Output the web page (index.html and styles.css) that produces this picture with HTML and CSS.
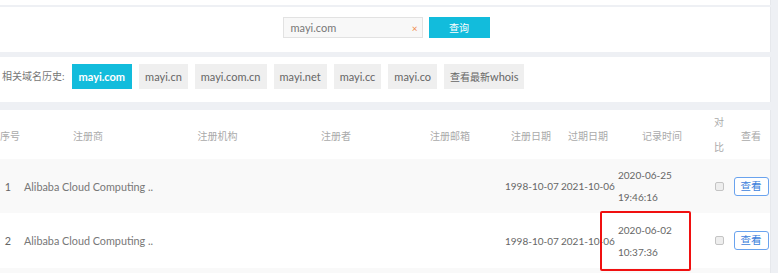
FILE: index.html
```html
<!DOCTYPE html>
<html lang="zh-CN">
<head>
    <meta charset="UTF-8">
    <title>Whois 历史</title>
    <link rel="stylesheet" href="styles.css">
</head>
<body>
    <div class="page">
        <div class="card top-strip"></div>

        <div class="card search-card">
            <div class="search-box">
                <span class="search-text">mayi.com</span>
                <span class="clear">×</span>
            </div>
            <button class="search-btn">查询</button>
        </div>

        <div class="card history-card">
            <span class="history-label">相关域名历史:</span>
            <span class="chip active">mayi.com</span>
            <span class="chip">mayi.cn</span>
            <span class="chip">mayi.com.cn</span>
            <span class="chip">mayi.net</span>
            <span class="chip">mayi.cc</span>
            <span class="chip">mayi.co</span>
            <span class="chip"><span class="cjk">查看最新</span>whois</span>
        </div>

        <div class="card table-card">
            <div class="row head">
                <div class="cell">序号</div>
                <div class="cell center">注册商</div>
                <div class="cell center">注册机构</div>
                <div class="cell center">注册者</div>
                <div class="cell center">注册邮箱</div>
                <div class="cell center">注册日期</div>
                <div class="cell center">过期日期</div>
                <div class="cell center">记录时间</div>
                <div class="cell center stack">对比</div>
                <div class="cell center">查看</div>
            </div>

            <div class="row odd">
                <div class="cell center">1</div>
                <div class="cell name">Alibaba Cloud Computing ..</div>
                <div class="cell"></div>
                <div class="cell"></div>
                <div class="cell"></div>
                <div class="cell date">1998-10-07</div>
                <div class="cell date">2021-10-06</div>
                <div class="cell time">2020-06-25<br>19:46:16</div>
                <div class="cell center"><span class="check"></span></div>
                <div class="cell center"><span class="view-btn">查看</span></div>
            </div>

            <div class="row marked">
                <div class="cell center">2</div>
                <div class="cell name">Alibaba Cloud Computing ..</div>
                <div class="cell"></div>
                <div class="cell"></div>
                <div class="cell"></div>
                <div class="cell date">1998-10-07</div>
                <div class="cell date">2021-10-06</div>
                <div class="cell time">2020-06-02<br>10:37:36</div>
                <div class="cell center"><span class="check"></span></div>
                <div class="cell center"><span class="view-btn">查看</span></div>
                <div class="highlight"></div>
            </div>

            <div class="row odd"></div>
        </div>
    </div>
</body>
</html>
```

FILE: styles.css
```css
body {
    margin: 0;
    background: #eef0f4;
    font-family: Lato, "Noto Sans CJK SC", sans-serif;
    font-size: 10.8px;
    color: #666;
    overflow: hidden;
}

.page {
    width: 771px;
    display: flex;
    flex-direction: column;
}

.card {
    background: #fff;
    border-right: 1px solid #e6e8ec;
}

.top-strip {
    height: 5px;
    margin-bottom: 2px;
}

.search-card {
    height: 45px;
    display: flex;
    justify-content: center;
    align-items: flex-start;
    gap: 6px;
    padding: 10px 0 0 2px;
    box-sizing: border-box;
}

.search-box {
    width: 140px;
    height: 21px;
    box-sizing: border-box;
    border: 1px solid #e2e2e2;
    background: #f8f8f8;
    display: flex;
    align-items: center;
    justify-content: space-between;
    padding: 0 4px 0 7px;
}

.search-text {
    font-size: 11px;
    color: #777;
}

.clear {
    color: #f08a4b;
    font-size: 10px;
}

.search-btn {
    width: 61px;
    height: 21px;
    border: none;
    background: #12bcdc;
    color: #fff;
    font-family: inherit;
    font-size: 10px;
    padding: 0;
}

.history-card {
    margin-top: 5px;
    height: 45px;
    box-sizing: border-box;
    display: flex;
    align-items: flex-start;
    gap: 7px;
    padding: 7px 0 0 2px;
}

.history-label {
    font-size: 10px;
    line-height: 25px;
    color: #777;
}

.chip {
    height: 25px;
    line-height: 25px;
    padding: 0 6px;
    background: #efefef;
    color: #666;
    font-size: 11px;
}

.chip .cjk {
    font-size: 10px;
}

.chip.active {
    background: #12bcdc;
    color: #fff;
    font-weight: bold;
    padding: 0 7px;
}

.table-card {
    margin-top: 8px;
}

.row {
    display: grid;
    grid-template-columns: 16px 144px 115px 122px 106px 56px 58px 90px 24px 40px;
    align-items: center;
}

.row.head {
    height: 49px;
    color: #aaa;
    font-size: 10px;
}

.row.odd {
    height: 54px;
    background: #f9f9f9;
}

.row.marked {
    height: 55px;
    background: #fff;
    position: relative;
}

.cell {
    white-space: nowrap;
}

.cell.center {
    display: flex;
    justify-content: center;
}

.cell.name {
    padding-left: 8px;
    color: #777;
}

.cell.date {
    font-size: 10px;
    padding-left: 2px;
}

.cell.time {
    font-size: 10px;
    padding-left: 1px;
    line-height: 22px;
}

.cell.stack {
    white-space: normal;
    padding: 0 6px;
    line-height: 25px;
    text-align: center;
}

.check {
    width: 7px;
    height: 7px;
    border: 1px solid #c4c4c4;
    border-radius: 2px;
    background: #eee;
}

.view-btn {
    width: 33px;
    height: 17px;
    line-height: 17px;
    text-align: center;
    border: 1px solid #6aa3ee;
    border-radius: 3px;
    color: #3d7fdc;
    background: #fff;
    font-size: 10.5px;
}

.highlight {
    position: absolute;
    left: 600px;
    top: -2px;
    width: 91px;
    height: 60px;
    box-sizing: border-box;
    border: 2px solid #f01010;
    border-radius: 2px;
}
```
